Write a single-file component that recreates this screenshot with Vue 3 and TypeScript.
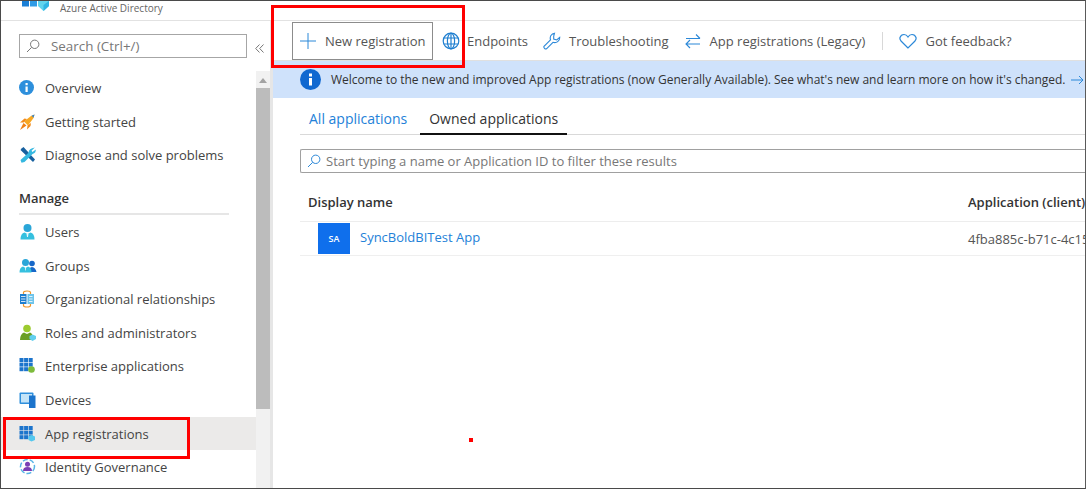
<script setup lang="ts">
interface NavItem { label: string; icon: string; active?: boolean }
const topNav: NavItem[] = [
  { label: 'Overview', icon: 'info' },
  { label: 'Getting started', icon: 'rocket' },
  { label: 'Diagnose and solve problems', icon: 'tools' },
]
const manageNav: NavItem[] = [
  { label: 'Users', icon: 'user' },
  { label: 'Groups', icon: 'groups' },
  { label: 'Organizational relationships', icon: 'org' },
  { label: 'Roles and administrators', icon: 'roles' },
  { label: 'Enterprise applications', icon: 'enterprise' },
  { label: 'Devices', icon: 'devices' },
  { label: 'App registrations', icon: 'apps', active: true },
  { label: 'Identity Governance', icon: 'identity' },
]
const grid = [0, 4.6, 9.2]
</script>

<template>
  <div class="frame">
    <header class="brand">
      <svg class="logo" width="28" height="11" viewBox="0 0 28 11">
        <rect x="1" y="0" width="7" height="5.500" fill="#1a7fd6" />
        <rect x="9" y="0" width="7" height="5.500" fill="#2f9be6" />
        <path d="M17 0h11v5l-5.500 5L17 5z" fill="#5fd4ee" />
        <path d="M22.500 4 28 0v5l-5.500 5z" fill="#2fb4e4" />
      </svg>
      <span class="brand-text">Azure Active Directory</span>
    </header>
    <div class="body">
      <aside class="sidebar">
        <div class="side-scroll">
          <div class="search-row">
            <div class="search">
              <svg width="14" height="14" viewBox="0 0 14 14" fill="none" stroke="#777" stroke-width="1">
                <circle cx="8.700" cy="5.300" r="4.200" /><path d="M5.700 8.300 1 13" />
              </svg>
              <span>Search (Ctrl+/)</span>
            </div>
            <svg class="collapse" width="9" height="9" viewBox="0 0 9 9" fill="none" stroke="#777" stroke-width="1">
              <path d="M4.500 .5 .7 4.500l3.800 4M8.500 .5 4.700 4.500l3.800 4" />
            </svg>
          </div>
          <nav class="nav first">
            <div v-for="item in topNav" :key="item.label" class="nav-item">
              <svg class="nav-icon" width="18" height="18" viewBox="0 0 18 18">
                <template v-if="item.icon === 'info'">
                  <circle cx="7.500" cy="8.500" r="7.500" fill="#2d8fdc" />
                  <rect x="6.500" y="7.500" width="2.200" height="5.500" fill="#fff" /><rect x="6.500" y="4" width="2.200" height="2.200" fill="#fff" />
                </template>
                <template v-else-if="item.icon === 'rocket'">
                  <path d="M5 8.500 12 3l3.500-1.500L14.500 5 9 12.500z" fill="#f7a823" />
                  <path d="M12.500 2.800 15.500 1.500 14.500 4.800z" fill="#3a86c8" />
                  <path d="M5.500 5.500 8 6 4.500 9.500 1 9.500zM12 10l-.5 3-3.500 3.500.5-4z" fill="#f28c1c" />
                  <path d="M4.500 10 7.500 12.500 1 17z" fill="#f07f13" />
                </template>
                <template v-else>
                  <path d="M2.500 2.500 4.500 1 16 13.500 14 16 1.500 4z" fill="#17609f" />
                  <path d="M15.800 1.500 12.500 4.700l1 1.300 3.300-2.500q.2 3.500-3.200 4.500L5.500 16l-3 .8L1.500 14l8-7.300q.2-4.200 6.300-5.200z" fill="#35b8e0" />
                </template>
              </svg>
              <span>{{ item.label }}</span>
            </div>
          </nav>
          <h2 class="section">Manage</h2>
          <nav class="nav manage">
            <div v-for="item in manageNav" :key="item.label" class="nav-item" :class="{ active: item.active }">
              <svg class="nav-icon" width="18" height="18" viewBox="0 0 18 18">
                <template v-if="item.icon === 'user'">
                  <circle cx="8.500" cy="5" r="4" fill="#2aa6d8" />
                  <path d="M1.500 16.500q0-6 4-7l3 1.500 3-1.500q4 1 4 7z" fill="#35c0df" />
                  <path d="M7.500 10.500h2l-.5 3.500h-1z" fill="#e8f8fc" />
                </template>
                <template v-else-if="item.icon === 'groups'">
                  <circle cx="13" cy="6.500" r="2.800" fill="#1667c8" />
                  <path d="M9.500 15q0-4.500 3.500-5 3.500 .5 4.500 5z" fill="#1667c8" />
                  <circle cx="6.500" cy="5.500" r="3.500" fill="#2aa6d8" />
                  <path d="M.5 15.500q0-5 3.500-6l2.500 1.500L9 9.500q3.500 1 3.500 6z" fill="#35c0df" />
                  <path d="M6 10.500h1l-.2 3h-.6z" fill="#e8f8fc" />
                </template>
                <template v-else-if="item.icon === 'org'">
                  <path d="M4.500 4V2.500q0-1.500 3.500-1.500t3.500 1.500V4M4.500 14v1.500q0 1.500 3.500 1.500t3.500-1.500V14" fill="none" stroke="#f0962a" stroke-width="1.200" />
                  <rect x="1" y="4" width="6.500" height="10" fill="#1f7fd0" />
                  <rect x="8.500" y="4" width="6.500" height="10" fill="#6ec4ea" />
                  <path d="M2 6.500h4.500M2 9h4.500M2 11.500h4.500M10 6.500h3.500M10 9h3.500M10 11.500h3.500" stroke="#fff" stroke-width=".8" />
                </template>
                <template v-else-if="item.icon === 'roles'">
                  <circle cx="8" cy="4.500" r="3.800" fill="#9ccb2f" />
                  <path d="M1 16q0-6 4-7.500l3 1.500 3-1.500q3 1 3.500 7.500z" fill="#6a9f24" />
                  <path d="M10.500 12 13.500 10.500l3.500 1.500v3L13.500 17l-3-2z" fill="#62cfee" />
                </template>
                <template v-else-if="item.icon === 'enterprise' || item.icon === 'apps'">
                  <g v-for="x in grid" :key="x">
                    <rect v-for="y in grid" :key="y" :x="x + .5" :y="y + 1" width="4" height="4" fill="#1c74cc" />
                  </g>
                  <circle v-if="item.icon === 'enterprise'" cx="12.500" cy="12.500" r="3.300" fill="#7dbb3c" />
                  <path v-else d="M9.500 11.500 12.500 10l3.500 1.500v3.500L12.500 16.500 9.500 15z" fill="#55c8ee" />
                </template>
                <template v-else-if="item.icon === 'devices'">
                  <rect x=".5" y="1.500" width="14" height="11.500" rx="1" fill="#2f8fdc" />
                  <rect x="2" y="3" width="11" height="8.500" fill="#c4e4f8" />
                  <rect x="10" y="4.500" width="6.500" height="12.500" fill="#1c74cc" />
                </template>
                <template v-else>
                  <circle cx="8.500" cy="8.500" r="7" fill="none" stroke="#58b4e6" stroke-width="1.500" stroke-dasharray="5 2" />
                  <circle cx="8.500" cy="6.300" r="2.500" fill="#7a3fb5" />
                  <path d="M4 13q0-4 4.500-4t4.500 4z" fill="#7a3fb5" />
                </template>
              </svg>
              <span>{{ item.label }}</span>
            </div>
          </nav>
        </div>
        <div class="scrollbar">
          <svg class="scroll-arrow" width="8" height="5" viewBox="0 0 8 5"><path d="M4 0l4 5H0z" fill="#a3a3a3" /></svg>
          <div class="thumb"></div>
        </div>
      </aside>
      <main class="main">
        <div class="toolbar">
          <button class="tool new">
            <svg width="16" height="16" viewBox="0 0 16 16" stroke="#2b88d8" stroke-width="1" fill="none"><path d="M8 0v16M0 8h16" /></svg>
            <span>New registration</span>
          </button>
          <div class="tool endpoints">
            <svg width="18" height="18" viewBox="0 0 18 18" fill="none" stroke="#1f7fd0" stroke-width="1.200">
              <circle cx="9" cy="9" r="7.800" /><ellipse cx="9" cy="9" rx="3.600" ry="7.800" /><path d="M1.800 6h14.400M1.800 12h14.400M9 1v16" />
            </svg>
            <span>Endpoints</span>
          </div>
          <div class="tool trouble">
            <svg width="18" height="18" viewBox="0 0 18 18" fill="none" stroke="#2b88d8" stroke-width="1.100">
              <path d="M11.500 1.200a5 5 0 0 0-4 6.600L1 14.300q-.5 1 .5 2t2 .5l6.500-6.500a5 5 0 0 0 6.700-5l-3 2.700-3-1V4.200z" />
            </svg>
            <span>Troubleshooting</span>
          </div>
          <div class="tool legacy">
            <svg width="16" height="16" viewBox="0 0 16 16" fill="none" stroke="#2b88d8" stroke-width="1.100">
              <path d="M1 5.500h14M11 1.500l4 4M1 11h14M5 7l-4 4 4 4" />
            </svg>
            <span>App registrations (Legacy)</span>
          </div>
          <div class="divider"></div>
          <div class="tool feedback">
            <svg width="18" height="16" viewBox="0 0 18 16" fill="none" stroke="#2b88d8" stroke-width="1.200">
              <path d="M9 15 2 8Q.5 6 1 4.500 2 1.500 5 1.500 7.500 1.500 9 4q1.500-2.500 4-2.500 3 0 4 3 .5 1.500-1 3.500z" />
            </svg>
            <span>Got feedback?</span>
          </div>
        </div>
        <div class="banner">
          <svg class="banner-icon" width="21" height="21" viewBox="0 0 21 21">
            <circle cx="10.500" cy="10.500" r="10.500" fill="#1068d0" />
            <rect x="9" y="9" width="3" height="7.500" fill="#fff" /><rect x="9" y="4.500" width="3" height="3" fill="#fff" />
          </svg>
          <span class="banner-text">Welcome to the new and improved App registrations (now Generally Available). See what's new and learn more on how it's changed.</span>
          <svg class="banner-arrow" width="13" height="10" viewBox="0 0 13 10" fill="none" stroke="#2b88d8" stroke-width="1"><path d="M0 5h12M8 1l4 4-4 4" /></svg>
        </div>
        <div class="content">
          <div class="tabs">
            <div class="tab link">All applications</div>
            <div class="tab selected">Owned applications</div>
          </div>
          <div class="filter">
            <svg width="14" height="14" viewBox="0 0 14 14" fill="none" stroke="#2b88d8" stroke-width="1">
              <circle cx="8.700" cy="5.300" r="4.200" /><path d="M5.700 8.300 1 13" />
            </svg>
            <span>Start typing a name or Application ID to filter these results</span>
          </div>
          <div class="table-head">
            <span class="col-name">Display name</span>
            <span class="col-id">Application (client)</span>
          </div>
          <div class="table-row">
            <div class="col-name app">
              <div class="avatar">SA</div>
              <span class="link">SyncBoldBITest App</span>
            </div>
            <span class="col-id id-value">4fba885c-b71c-4c15</span>
          </div>
        </div>
      </main>
    </div>
    <div class="mark mark-new"></div>
    <div class="mark mark-app"></div>
    <div class="mark-dot"></div>
  </div>
</template>

<style>
html, body { margin: 0; background: #fff; overflow: hidden; }
</style>

<style scoped>
.frame {
  position: relative;
  box-sizing: border-box;
  width: 1086px;
  height: 489px;
  border: 1px solid #4a4a4a;
  border-right-color: #5a5a5a;
  overflow: hidden;
  display: flex;
  flex-direction: column;
  background: #fff;
  color: #444;
  font-family: "Open Sans", "Noto Sans", sans-serif;
  font-size: 13px;
}
.brand {
  height: 20px;
  box-sizing: border-box;
  flex: none;
  border-bottom: 1px solid #e2e2e2;
  display: flex;
  align-items: flex-start;
  padding-left: 20px;
  gap: 11px;
}
.logo { flex: none; }
.brand-text { font-size: 10px; line-height: 15px; color: #666; }
.body { flex: 1; min-height: 0; display: flex; }
.sidebar { width: 272px; flex: none; display: flex; border-right: 3px solid #e6e6e6; box-sizing: border-box; }
.side-scroll { width: 255px; flex: none; padding-top: 13px; box-sizing: border-box; }
.search-row { display: flex; align-items: center; padding-left: 18px; gap: 8px; }
.search {
  box-sizing: border-box;
  flex: none;
  width: 228px;
  height: 24px;
  border: 1px solid #a6a6a6;
  display: flex;
  align-items: center;
  padding-left: 6px;
  gap: 11px;
  color: #777;
  font-size: 13.400px;
}
.collapse { flex: none; margin-top: 5px; }
.nav.first { margin-top: 13.400px; }
.nav.manage { margin-top: .4px; }
.nav-item {
  height: 33.600px;
  display: flex;
  align-items: center;
  padding-left: 18px;
  gap: 8px;
  white-space: nowrap;
  color: #444;
}
.nav-item.active { background: #ebeae9; }
.nav-icon { flex: none; }
.section {
  margin: 16.600px 0 0 18px;
  width: 210px;
  padding-bottom: 6px;
  border-bottom: 2px solid #e6e6e6;
  font-size: 13px;
  line-height: 18px;
  font-weight: 600;
  color: #333;
}
.scrollbar {
  width: 14px;
  flex: none;
  margin-top: 50px;
  background: #f1f1f1;
  display: flex;
  flex-direction: column;
  align-items: center;
}
.scroll-arrow { margin-top: 7px; flex: none; }
.thumb { width: 14px; height: 321px; margin-top: 5px; background: #bcbcbc; }
.main { flex: 1; min-width: 0; display: flex; flex-direction: column; }
.toolbar {
  height: 40px;
  box-sizing: border-box;
  flex: none;
  display: flex;
  align-items: center;
  padding-left: 19px;
  border-bottom: 1px solid #e0e0e0;
}
.tool { display: flex; align-items: center; white-space: nowrap; color: #555; gap: 8px; }
.new {
  box-sizing: border-box;
  flex: none;
  width: 141px;
  height: 38px;
  background: #fff;
  border: 1px solid #8c8c8c;
  padding: 0 0 0 7px;
  gap: 9px;
  font: inherit;
  color: #555;
}
.endpoints { margin-left: 9px; gap: 7px; }
.trouble { margin-left: 15px; }
.legacy { margin-left: 16px; gap: 9px; }
.divider { width: 1px; height: 18px; background: #d8d8d8; margin: 0 16px 0 17px; }
.banner {
  height: 37px;
  flex: none;
  background: #cfe2fb;
  display: flex;
  align-items: center;
  padding-left: 27px;
  white-space: nowrap;
  color: #333;
  font-size: 12px;
  letter-spacing: -.018px;
}
.banner-icon { flex: none; }
.banner-text { margin-left: 10px; }
.banner-arrow { margin-left: 5px; flex: none; }
.content { padding-left: 27px; }
.tabs {
  margin-top: 7px;
  height: 30px;
  box-sizing: border-box;
  border-bottom: 1px solid #d9d9d9;
  display: flex;
}
.tab { height: 30px; box-sizing: border-box; font-size: 14px; line-height: 27px; padding: 0 9px; }
.tab.link { color: #2381d8; }
.tab.selected { margin-left: 4px; color: #333; border-bottom: 2px solid #111; }
.link { color: #2381d8; }
.filter {
  margin-top: 14px;
  height: 24px;
  box-sizing: border-box;
  border: 1px solid #a0a0a0;
  border-right: none;
  border-radius: 2px 0 0 2px;
  display: flex;
  align-items: center;
  padding-left: 6px;
  gap: 5px;
  color: #777;
  font-size: 13px;
}
.table-head {
  margin-top: 16px;
  height: 33px;
  box-sizing: border-box;
  border-bottom: 1px solid #ededed;
  display: flex;
  align-items: center;
  font-weight: 600;
  color: #333;
  padding-bottom: 7px;
}
.col-name { width: 668px; flex: none; padding-left: 8px; box-sizing: border-box; white-space: nowrap; }
.col-id { white-space: nowrap; }
.table-row { height: 34px; box-sizing: border-box; border-bottom: 1px solid #efefef; display: flex; align-items: center; }
.app { display: flex; align-items: center; gap: 10px; padding-left: 18px; }
.avatar {
  width: 32px;
  height: 31px;
  background: #0f6fec;
  color: #fff;
  font-size: 9px;
  font-weight: 600;
  display: flex;
  align-items: center;
  justify-content: center;
}
.app .link { margin-top: -4px; }
.id-value { color: #555; }
.mark { position: absolute; border: 3px solid #f00; box-sizing: border-box; pointer-events: none; }
.mark-new { left: 270px; top: 4px; width: 194px; height: 63px; }
.mark-app { left: 2px; top: 416px; width: 187px; height: 42px; }
.mark-dot { position: absolute; left: 468px; top: 437px; width: 4px; height: 4px; background: #f00; }
</style>
